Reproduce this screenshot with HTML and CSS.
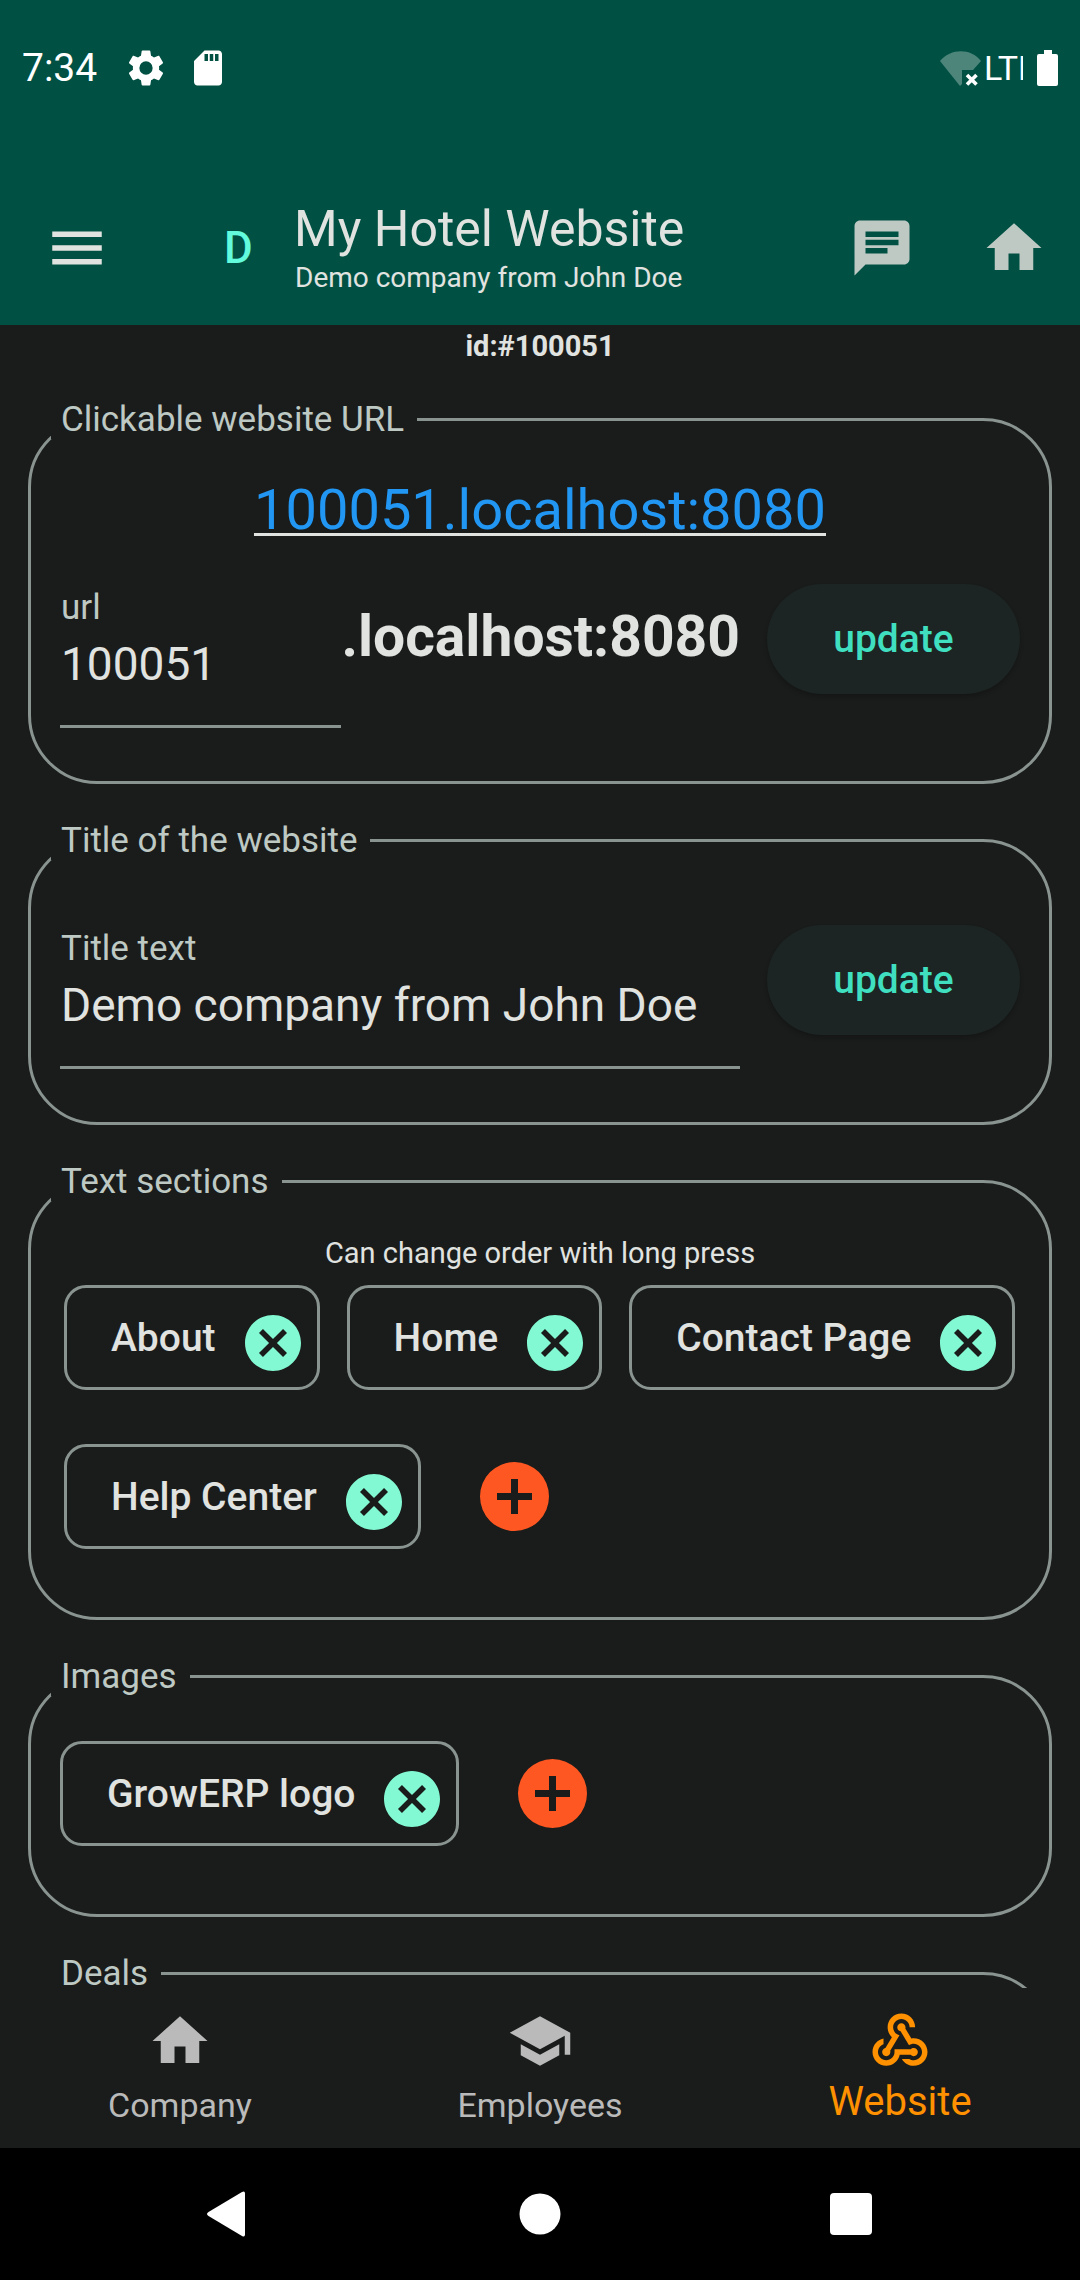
FILE: index.html
```html
<!DOCTYPE html>
<html lang="en">
<head>
<meta charset="utf-8">
<meta name="viewport" content="width=device-width, initial-scale=1">
<title>My Hotel Website</title>
<link rel="stylesheet" href="styles.css">
</head>
<body>
<svg class="sprite" aria-hidden="true">
  <symbol id="cancel" viewBox="2 2 20 20"><path d="M12 2C6.47 2 2 6.47 2 12s4.47 10 10 10 10-4.47 10-10S17.53 2 12 2zm5 13.59L15.59 17 12 13.41 8.41 17 7 15.59 10.59 12 7 8.41 8.41 7 12 10.59 15.59 7 17 8.41 13.41 12 17 15.59z"/></symbol>
  <symbol id="home" viewBox="0 0 24 24"><path d="M10 20v-6h4v6h5v-8h3L12 3 2 12h3v8z"/></symbol>
  <symbol id="plus" viewBox="0 0 69 69"><path fill-rule="evenodd" d="M34.500 0a34.500 34.500 0 1 0 0 69 34.500 34.500 0 1 0 0-69zM31 17h7v14h14v7H38v14h-7V38H17v-7h14z"/></symbol>
</svg>
<div class="app">
  <header class="header">
    <div class="status">
      <span class="time">7:34</span>
      <svg class="status-icon" viewBox="0 0 24 24"><path d="M19.5 12c0-.34-.03-.66-.07-.98l2.11-1.65c.19-.15.24-.42.12-.64l-2-3.46c-.12-.22-.39-.3-.61-.22l-2.49 1c-.52-.4-1.08-.73-1.69-.98l-.38-2.65C14.46 2.18 14.25 2 14 2h-4c-.25 0-.46.18-.49.42l-.38 2.65c-.61.25-1.17.59-1.69.98l-2.49-1c-.23-.09-.49 0-.61.22l-2 3.46c-.13.22-.07.49.12.64l2.11 1.65c-.04.32-.07.65-.07.98s.03.66.07.98l-2.11 1.65c-.19.15-.24.42-.12.64l2 3.46c.12.22.39.3.61.22l2.49-1c.52.4 1.08.73 1.69.98l.38 2.65c.03.24.24.42.49.42h4c.25 0 .46-.18.49-.42l.38-2.65c.61-.25 1.17-.59 1.69-.98l2.49 1c.23.09.49 0 .61-.22l2-3.46c.12-.22.07-.49-.12-.64l-2.11-1.65c.04-.32.07-.64.07-.98zM12 15.8a3.8 3.8 0 1 1 0-7.6 3.8 3.8 0 0 1 0 7.6z"/></svg>
      <svg class="status-icon status-card" viewBox="0 0 24 24"><path d="M18 2h-8L4.02 8 4 20c0 1.1.9 2 2 2h12c1.1 0 2-.9 2-2V4c0-1.1-.9-2-2-2zm-6 6h-2V4h2v4zm3 0h-2V4h2v4zm3 0h-2V4h2v4z"/></svg>
      <svg class="wifi" viewBox="0 0 42 35"><path fill-opacity=".3" d="M0 10C11-3 31-3 41 10l-8 9H22v14l-2 2z"/><path fill="none" stroke="#fff" stroke-width="3.6" d="M27 24l9.500 9.500M36.500 24L27 33.500"/></svg>
      <span class="network">LTE</span>
      <svg class="battery" viewBox="0 0 21 36"><path d="M7 0h8v4h4q2 0 2 2v28q0 2-2 2H2q-2 0-2-2V6q0-2 2-2h5z"/></svg>
    </div>
    <div class="toolbar">
      <button class="icon-button menu" aria-label="Menu"><svg class="icon" viewBox="0 0 24 24"><path d="M3 18h18v-2H3v2zm0-5h18v-2H3v2zm0-7v2h18V6H3z"/></svg></button>
      <span class="avatar">D</span>
      <div class="heading">
        <h1 class="title">My Hotel Website</h1>
        <p class="subtitle">Demo company from John Doe</p>
      </div>
      <div class="actions">
        <button class="icon-button" aria-label="Chat"><svg class="icon" viewBox="0 0 24 24"><path d="M20 2H4c-1.100 0-1.990.9-1.990 2L2 22l4-4h14c1.100 0 2-.9 2-2V4c0-1.100-.9-2-2-2zM6 9h12v2H6V9zm8 5H6v-2h8v2zm4-6H6V6h12v2z"/></svg></button>
        <button class="icon-button" aria-label="Home"><svg class="icon"><use href="#home"/></svg></button>
      </div>
    </div>
  </header>

  <main class="main">
    <p class="record-id">id:#100051</p>

    <fieldset class="card">
      <legend class="legend">Clickable website URL</legend>
      <div class="card-body card-url">
        <a class="link" href="http://100051.localhost:8080">100051.localhost:8080</a>
        <div class="form-row">
          <div class="field">
            <label class="label" for="url">url</label>
            <input class="input" id="url" type="text" value="100051">
          </div>
          <span class="domain">.localhost:8080</span>
          <button class="update">update</button>
        </div>
      </div>
    </fieldset>

    <fieldset class="card">
      <legend class="legend">Title of the website</legend>
      <div class="card-body card-title">
        <div class="form-row">
          <div class="field">
            <label class="label" for="title">Title text</label>
            <input class="input" id="title" type="text" value="Demo company from John Doe">
          </div>
          <button class="update">update</button>
        </div>
      </div>
    </fieldset>

    <fieldset class="card">
      <legend class="legend">Text sections</legend>
      <div class="card-body card-sections">
        <p class="hint">Can change order with long press</p>
        <div class="chips chips-inset">
          <div class="chip">About<button class="remove" aria-label="Remove About"><svg><use href="#cancel"/></svg></button></div>
          <div class="chip">Home<button class="remove" aria-label="Remove Home"><svg><use href="#cancel"/></svg></button></div>
          <div class="chip">Contact Page<button class="remove" aria-label="Remove Contact Page"><svg><use href="#cancel"/></svg></button></div>
          <div class="chip">Help Center<button class="remove" aria-label="Remove Help Center"><svg><use href="#cancel"/></svg></button></div>
          <button class="add" aria-label="Add text section"><svg><use href="#plus"/></svg></button>
        </div>
      </div>
    </fieldset>

    <fieldset class="card">
      <legend class="legend">Images</legend>
      <div class="card-body card-images">
        <div class="chips">
          <div class="chip">GrowERP logo<button class="remove" aria-label="Remove GrowERP logo"><svg><use href="#cancel"/></svg></button></div>
          <button class="add" aria-label="Add image"><svg><use href="#plus"/></svg></button>
        </div>
      </div>
    </fieldset>

    <fieldset class="card">
      <legend class="legend">Deals</legend>
      <div class="card-body card-deals"></div>
    </fieldset>
  </main>

  <nav class="tabs">
    <a class="tab" href="#company"><svg class="icon"><use href="#home"/></svg>Company</a>
    <a class="tab" href="#employees"><svg class="icon" viewBox="0 0 24 24"><path d="M5 13.180v4L12 21l7-3.820v-4L12 17l-7-3.820zM12 3L1 9l11 6 9-4.910V17h2V9L12 3z"/></svg>Employees</a>
    <a class="tab tab-active" href="#website" aria-current="page"><svg class="icon" viewBox="0 0 24 24"><path d="M10 15h5.880c.27-.31.67-.5 1.120-.5.83 0 1.500.67 1.500 1.500s-.67 1.500-1.500 1.500c-.44 0-.84-.19-1.120-.5H11.900c-.46 2.280-2.480 4-4.900 4-2.760 0-5-2.240-5-5 0-2.420 1.720-4.440 4-4.900v2.070c-1.160.41-2 1.530-2 2.830 0 1.650 1.350 3 3 3s3-1.350 3-3v-1zm2.500-11c1.650 0 3 1.350 3 3h2c0-2.760-2.240-5-5-5-2.760 0-5 2.240-5 5 0 1.430.6 2.710 1.550 3.620l-2.350 3.900c-.68.14-1.200.75-1.200 1.480 0 .83.67 1.500 1.500 1.500s1.500-.67 1.500-1.500c0-.16-.02-.31-.07-.45l3.380-5.630C10.490 9.610 9.500 8.420 9.500 7c0-1.650 1.350-3 3-3zm4.500 9c-.64 0-1.230.2-1.720.54l-3.050-5.070C11.530 8.350 11 7.740 11 7c0-.83.67-1.500 1.500-1.500S14 6.170 14 7c0 .15-.02.29-.06.43l2.190 3.650c.28-.05.57-.08.87-.08 2.760 0 5 2.240 5 5s-2.240 5-5 5c-1.850 0-3.470-1.010-4.330-2.500h2.670c.48.32 1.050.5 1.660.5 1.650 0 3-1.350 3-3s-1.350-3-3-3z"/></svg>Website</a>
  </nav>

  <div class="system-nav">
    <button class="icon-button" aria-label="Back"><svg class="icon" viewBox="0 0 66 66"><path d="M51 12.500v41q0 3-3 1.500L14.500 35q-3-2 0-4L48 11q3-1.500 3 1.500z"/></svg></button>
    <button class="icon-button" aria-label="Home screen"><svg class="icon" viewBox="0 0 66 66"><circle cx="33" cy="33" r="20.500"/></svg></button>
    <button class="icon-button" aria-label="Recent apps"><svg class="icon" viewBox="0 0 66 66"><rect x="10" y="12" width="42" height="42" rx="4"/></svg></button>
  </div>
</div>
</body>
</html>
```
FILE: styles.css
```css
:root {
  --surface: #1a1c1b;
  --header: #005143;
  --text: #e1e3e0;
  --muted: #bec9c4;
  --outline: #899390;
  --primary: #3fdfc0;
}

* { box-sizing: border-box; }

body {
  margin: 0;
  background: var(--surface);
  color: var(--text);
  font-family: Roboto, "Liberation Sans", sans-serif;
}

h1, p { margin: 0; font-weight: 400; }

button {
  padding: 0;
  border: 0;
  background: none;
  color: inherit;
  font-family: inherit;
}

svg { display: block; fill: currentColor; }

.sprite { position: absolute; width: 0; height: 0; }

.app {
  display: flex;
  flex-direction: column;
  height: 100vh;
}

.icon-button { flex: none; }
.icon { width: 66px; height: 66px; }

/* Header */
.header { background: var(--header); }

.status {
  display: flex;
  align-items: center;
  height: 136px;
  padding: 0 22px;
  color: #fff;
}
.time { font-size: 39px; line-height: 48px; margin-right: 28px; }
.status-icon { width: 42px; height: 42px; }
.status-card { margin-left: 20px; }
.wifi { width: 42px; height: 35px; margin-left: auto; }
.network {
  width: 39px;
  margin: 0 14px 0 2px;
  overflow: hidden;
  font-size: 34px;
  line-height: 40px;
}
.battery { width: 21px; height: 36px; }

.toolbar {
  display: flex;
  align-items: center;
  height: 154px;
  margin-top: 35px;
  padding: 0 33px 0 44px;
}
.avatar {
  width: 70px;
  margin-left: 114px;
  color: #62fbdb;
  font-size: 44px;
  font-weight: 500;
  line-height: 56px;
}
.title { font-size: 50px; line-height: 60px; white-space: nowrap; }
.subtitle { font-size: 28px; line-height: 38px; padding-left: 1px; }
.actions {
  display: flex;
  gap: 66px;
  margin-left: auto;
  color: var(--muted);
}

/* Content */
.main {
  flex: 1;
  min-height: 0;
  padding: 0 28px;
  overflow-y: auto;
  scrollbar-width: none;
}
.record-id {
  margin-bottom: 33px;
  font-size: 29px;
  font-weight: 700;
  line-height: 42px;
  text-align: center;
}

.card {
  min-width: 0;
  margin: 0 0 37px;
  padding: 0;
  border: 3px solid var(--outline);
  border-radius: 69px;
}
.legend {
  margin-left: 20px;
  padding: 0 13px 0 10px;
  color: var(--muted);
  font-size: 35px;
  line-height: 39px;
}
.card-body { padding-left: 29px; padding-right: 29px; }
.card-url { padding-top: 38px; padding-bottom: 53px; }
.card-title { padding-top: 30px; padding-bottom: 53px; }
.card-sections { padding-top: 34px; padding-bottom: 68px; }
.card-images { padding-top: 45px; padding-bottom: 68px; }
.card-deals { min-height: 200px; }

.link {
  display: block;
  width: fit-content;
  margin: 0 auto 6px;
  color: #2196f3;
  font-size: 56px;
  line-height: 66px;
  text-decoration: underline 3px var(--text);
  text-underline-offset: 4px;
  text-decoration-skip-ink: none;
}

.form-row { display: flex; align-items: center; }
.field {
  flex: 1;
  min-width: 0;
  padding-top: 39px;
  border-bottom: 3px solid var(--outline);
}
.label {
  display: block;
  margin-bottom: 8px;
  padding-left: 1px;
  color: var(--muted);
  font-size: 35px;
  line-height: 40px;
}
.input {
  display: block;
  width: 100%;
  height: 56px;
  margin-bottom: 33px;
  padding: 0 0 0 1px;
  border: 0;
  background: none;
  color: var(--text);
  font-family: inherit;
  font-size: 46px;
}
.domain { font-size: 57px; font-weight: 700; line-height: 66px; padding-bottom: 4px; }
.update {
  flex: none;
  width: 253px;
  height: 110px;
  margin-left: 27px;
  border-radius: 55px;
  background: #1c2523;
  box-shadow: 0 3px 4px rgba(0, 0, 0, .2);
  color: var(--primary);
  font-size: 39px;
  font-weight: 500;
}

.hint {
  margin-bottom: 14px;
  font-size: 29px;
  line-height: 36px;
  text-align: center;
}
.chips {
  display: flex;
  flex-wrap: wrap;
  align-items: center;
  gap: 54px 27px;
}
.chips-inset { padding-left: 4px; }
.chip {
  display: flex;
  align-items: center;
  height: 105px;
  padding: 0 16px 0 44px;
  border: 3px solid var(--outline);
  border-radius: 22px;
  font-size: 39px;
  font-weight: 500;
}
.remove { margin: 11px 0 0 29px; color: #82f9d2; }
.remove svg { width: 56px; height: 56px; }
.add { margin-left: 32px; color: #ff5722; }
.add svg { width: 69px; height: 69px; }

/* Bottom navigation */
.tabs {
  display: grid;
  grid-template-columns: repeat(3, 1fr);
  height: 160px;
}
.tab {
  display: flex;
  flex-direction: column;
  align-items: center;
  gap: 4px;
  padding-top: 20px;
  color: #b9bab9;
  font-size: 34px;
  line-height: 54px;
  text-decoration: none;
}
.tab-active { color: #ff9100; font-size: 40px; line-height: 48px; }

.system-nav {
  display: flex;
  align-items: center;
  justify-content: center;
  gap: 247px;
  height: 132px;
  background: #000;
  color: #fff;
}
```
